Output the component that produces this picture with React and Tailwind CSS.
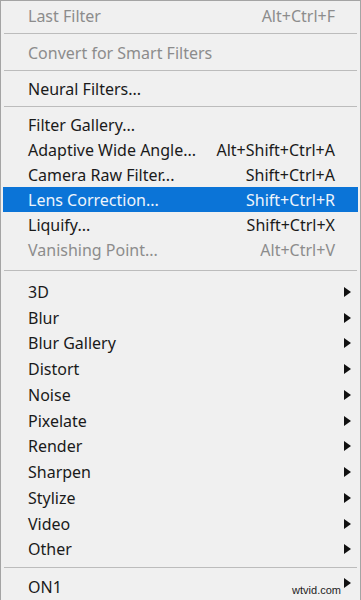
const groups = [
  { items: [{ label: "Last Filter", shortcut: "Alt+Ctrl+F", disabled: true }] },
  { items: [{ label: "Convert for Smart Filters", disabled: true }] },
  { items: [{ label: "Neural Filters..." }] },
  {
    items: [
      { label: "Filter Gallery..." },
      { label: "Adaptive Wide Angle...", shortcut: "Alt+Shift+Ctrl+A" },
      { label: "Camera Raw Filter...", shortcut: "Shift+Ctrl+A" },
      { label: "Lens Correction...", shortcut: "Shift+Ctrl+R", active: true },
      { label: "Liquify...", shortcut: "Shift+Ctrl+X" },
      { label: "Vanishing Point...", shortcut: "Alt+Ctrl+V", disabled: true },
    ],
  },
];

const submenus = [
  "3D",
  "Blur",
  "Blur Gallery",
  "Distort",
  "Noise",
  "Pixelate",
  "Render",
  "Sharpen",
  "Stylize",
  "Video",
  "Other",
];

function Arrow({ className = "top-1/2 -translate-y-1/2" }) {
  return (
    <svg width="7" height="10" viewBox="0 0 7 10" className={`absolute right-[9px] ${className}`}>
      <path d="M0 0 L7 5 L0 10 Z" fill="#111" />
    </svg>
  );
}

function Separator({ className = "my-[5px]" }) {
  return <div className={`mx-[3px] h-px bg-[#bcbcbc] ${className}`} />;
}

function Item({ label, shortcut, disabled, active }) {
  const color = active ? "text-[#eef5fc]" : disabled ? "text-[#8c8c8c]" : "text-[#1a1a1a]";
  return (
    <div
      className={`mx-[2px] flex h-[25px] items-center justify-between pl-[25px] pr-[23px] ${
        active ? "bg-[#0b74d7]" : ""
      } ${color}`}
    >
      <span>{label}</span>
      {shortcut && <span>{shortcut}</span>}
    </div>
  );
}

export default function App() {
  return (
    <div
      className="relative h-[600px] w-[361px] overflow-hidden border-x border-t border-[#a4a4a4] bg-[#f0f0f0] pt-[2px] text-[16px] leading-none"
      style={{ fontFamily: '"Noto Sans", "Open Sans", sans-serif' }}
    >
      {groups.map((g, gi) => (
        <div key={gi}>
          {gi > 0 && <Separator className={gi === 1 ? "mt-[5px] mb-[6px]" : "my-[5px]"} />}
          {g.items.map((it) => (
            <Item key={it.label} {...it} />
          ))}
        </div>
      ))}
      <Separator className="mt-[8px] mb-[8px]" />
      {submenus.map((s) => (
        <div key={s} className="relative flex h-[25.75px] items-center pl-[27px] text-[#1a1a1a]">
          <span>{s}</span>
          <Arrow />
        </div>
      ))}
      <Separator className="mt-[5px] mb-[6px]" />
      <div className="relative flex h-[25px] items-center pl-[27px] text-[#1a1a1a]">
        <span>ON1</span>
        <Arrow className="top-[4px]" />
      </div>
      <span
        className="absolute bottom-[4px] right-[19px] text-[11px] leading-none text-[#222]"
        style={{ fontFamily: '"Liberation Sans", Arial, sans-serif' }}
      >
        wtvid.com
      </span>
    </div>
  );
}
